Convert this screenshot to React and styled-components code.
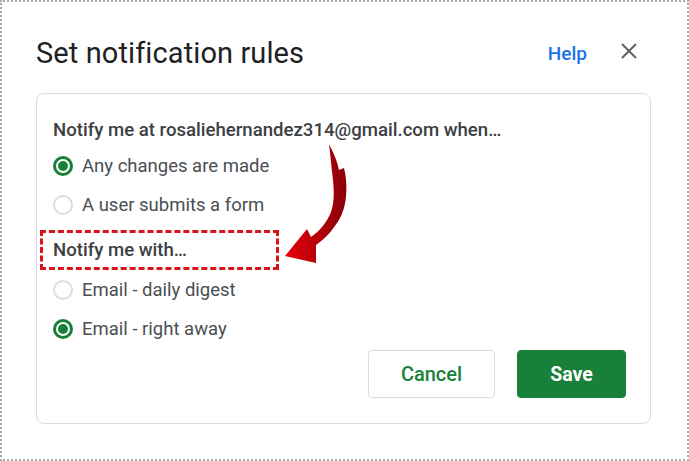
import React from 'react'
import styled, { createGlobalStyle } from 'styled-components'

const GlobalStyle = createGlobalStyle`
  body {
    margin: 0;
    background: #fff;
    font-family: Roboto, "Liberation Sans", Arial, sans-serif;
  }
`

const Frame = styled.div`
  position: relative;
  width: 689px;
  height: 461px;
  box-sizing: border-box;
  border: 2px dotted #a9a9a9;
  padding: 31px 36px 0 34px;
  background: #fff;
`

const Header = styled.div`
  display: flex;
  align-items: center;
  height: 40px;
  padding-right: 14px;
`

const Title = styled.h1`
  flex: 1;
  margin: 0;
  font-size: 29px;
  font-weight: 400;
  color: #202124;
  letter-spacing: 0.1px;
`

const HelpLink = styled.a`
  font-size: 19px;
  font-weight: 500;
  color: #1a73e8;
  text-decoration: none;
`

const CloseButton = styled.button`
  display: flex;
  align-items: center;
  justify-content: center;
  width: 16px;
  height: 16px;
  margin: -4px 0 0 34px;
  padding: 0;
  border: none;
  background: none;
  color: #5f6368;
`

const Card = styled.div`
  margin-top: 20px;
  border: 1px solid #dadce0;
  border-radius: 8px;
  padding: 20px 24px 25px 16px;
`

const Heading = styled.div`
  display: flex;
  align-items: center;
  height: 32px;
  font-size: 18.6px;
  font-weight: 500;
  color: #3c4043;
`

const Highlight = styled(Heading)`
  box-sizing: border-box;
  width: 239px;
  height: 40px;
  margin: 6px 0 0 -13px;
  padding-left: 10px;
  border: 3px dashed #d8141b;
`

const Option = styled.label`
  display: flex;
  align-items: center;
  gap: 9px;
  height: 39px;
  font-size: 18.5px;
  color: #4a4e52;
`

const Radio = styled.span`
  position: relative;
  width: 20px;
  height: 20px;
  box-sizing: border-box;
  border-radius: 50%;
  border: ${p => (p.$checked ? '3px solid #188038' : '2px solid #dadce0')};

  &::after {
    content: '';
    display: ${p => (p.$checked ? 'block' : 'none')};
    position: absolute;
    inset: 2px;
    border-radius: 50%;
    background: #188038;
  }
`

const Actions = styled.div`
  display: flex;
  justify-content: flex-end;
  gap: 22px;
  margin-top: 2px;
`

const Button = styled.button`
  height: 48px;
  width: ${p => p.$width}px;
  border-radius: 4px;
  font-family: Roboto, "Liberation Sans", Arial, sans-serif;
  font-size: ${p => (p.$primary ? 19.5 : 20)}px;
  font-weight: ${p => (p.$primary ? 700 : 500)};
  border: 1px solid ${p => (p.$primary ? '#188038' : '#dadce0')};
  background: ${p => (p.$primary ? '#188038' : '#fff')};
  color: ${p => (p.$primary ? '#fff' : '#188038')};
`

const Arrow = styled.svg`
  position: absolute;
  left: 0;
  top: 0;
  pointer-events: none;
`

const RadioOption = ({ checked, children }) => (
  <Option>
    <Radio $checked={checked} />
    {children}
  </Option>
)

const App = () => (
  <>
    <GlobalStyle />
    <Frame>
      <Header>
        <Title>Set notification rules</Title>
        <HelpLink href="#">Help</HelpLink>
        <CloseButton aria-label="Close">
          <svg width="16" height="16" viewBox="0 0 16 16">
            <path d="M1 1 L15 15 M15 1 L1 15" stroke="currentColor" strokeWidth="2" />
          </svg>
        </CloseButton>
      </Header>
      <Card>
        <Heading>Notify me at rosaliehernandez314@gmail.com when…</Heading>
        <RadioOption checked>Any changes are made</RadioOption>
        <RadioOption>A user submits a form</RadioOption>
        <Highlight>Notify me with…</Highlight>
        <RadioOption>Email - daily digest</RadioOption>
        <RadioOption checked>Email - right away</RadioOption>
        <Actions>
          <Button $width={127}>Cancel</Button>
          <Button $width={109} $primary>Save</Button>
        </Actions>
      </Card>
      <Arrow width="689" height="461" viewBox="0 0 689 461">
        <defs>
          <linearGradient id="arrowFill" x1="0" y1="0" x2="1" y2="0">
            <stop offset="0" stopColor="#e8000c" />
            <stop offset="1" stopColor="#8a0007" />
          </linearGradient>
        </defs>
        <path
          d="M327 142 C331 150 335 158 337 168 L342 166 C346 182 345 202 339 214 C333 226 324 236 314 243 L314 261 L283 254 L305 227 L309 235 C318 229 325 220 329 210 C333 198 332 185 330 170 C329 160 328 150 327 142 Z"
          fill="url(#arrowFill)"
        />
      </Arrow>
    </Frame>
  </>
)

export default App
